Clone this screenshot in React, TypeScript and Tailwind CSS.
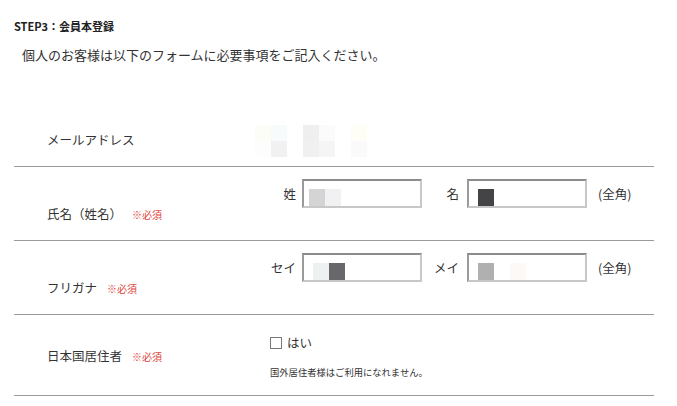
const font = "font-['Noto_Sans_CJK_JP','Noto_Sans',sans-serif]";

function Required() {
  return <span className="ml-[10px] text-[10px] text-[#e0443c]">※必須</span>;
}

function Block({ className }: { className: string }) {
  return <span className={`block w-[16px] h-[17px] ${className}`} />;
}

function TextBox({ children }: { children?: React.ReactNode }) {
  return (
    <div className="w-[120px] h-[29px] border-2 border-[#a3a3a3] border-t-[#8c8c8c] border-l-[#9a9a9a] border-b-[#c8c8c8] border-r-[#c8c8c8] bg-white flex items-end pl-[5px]">
      {children}
    </div>
  );
}

export default function App() {
  return (
    <div className={`${font} w-[677px] h-[406px] bg-white text-[#333] overflow-hidden`}>
      <div className="pt-[18px] pl-[14px] text-[11px] font-bold leading-[16px] text-[#222]">
        STEP3：会員本登録
      </div>
      <p className="mt-[11px] pl-[22px] text-[13px] leading-[20px]">
        個人のお客様は以下のフォームに必要事項をご記入ください。
      </p>

      <div className="mt-[36px] ml-[14px] w-[640px] text-[12.5px] leading-[20px]">
        {/* email */}
        <div className="flex h-[66px] border-b border-[#9a9a9a]">
          <div className="w-[241px] pl-[33px] pt-[29px]">メールアドレス</div>
          <div className="pt-[24px] grid grid-cols-[repeat(8,16px)] grid-rows-[16px_16px]">
            <span className="bg-[#fdfdf8]" />
            <span className="bg-[#f7fbfb]" />
            <span />
            <span className="bg-[#efefef]" />
            <span className="bg-[#fbfbfb]" />
            <span />
            <span className="bg-[#fefdf6]" />
            <span />
            <span className="bg-[#fdfdfd]" />
            <span className="bg-[#f1f1f1]" />
            <span />
            <span className="bg-[#f0f0f0]" />
            <span className="bg-[#f5f5f5]" />
            <span />
            <span className="bg-[#fafafa]" />
            <span />
          </div>
        </div>

        {/* name */}
        <div className="flex h-[74px] border-b border-[#9a9a9a]">
          <div className="w-[241px] pl-[33px] pt-[37px]">
            氏名（姓名）
            <Required />
          </div>
          <div className="pt-[12px] flex items-center h-[41px]">
            <span className="w-[47px] pr-[6px] text-right">姓</span>
            <TextBox>
              <Block className="bg-[#d4d4d4]" />
              <Block className="bg-[#f1f1f3]" />
            </TextBox>
            <span className="w-[45px] pr-[8px] text-right">名</span>
            <TextBox>
              <span className="ml-[4px]" />
              <Block className="bg-[#444446]" />
            </TextBox>
            <span className="ml-[11px]">(全角)</span>
          </div>
        </div>

        {/* kana */}
        <div className="flex h-[74px] border-b border-[#9a9a9a]">
          <div className="w-[241px] pl-[33px] pt-[37px]">
            フリガナ
            <Required />
          </div>
          <div className="pt-[12px] flex items-center h-[41px]">
            <span className="w-[47px] pr-[6px] text-right">セイ</span>
            <TextBox>
              <span className="ml-[4px]" />
              <Block className="bg-[#eef1f1]" />
              <Block className="bg-[#68686c]" />
            </TextBox>
            <span className="w-[45px] pr-[8px] text-right">メイ</span>
            <TextBox>
              <span className="ml-[4px]" />
              <Block className="bg-[#b0b0b0]" />
              <span className="w-[16px]" />
              <Block className="bg-[#fdf9f6]" />
            </TextBox>
            <span className="ml-[11px]">(全角)</span>
          </div>
        </div>

        {/* residence */}
        <div className="flex h-[81px] border-b border-[#9a9a9a]">
          <div className="w-[241px] pl-[33px] pt-[31px]">
            日本国居住者
            <Required />
          </div>
          <div className="pl-[15px] pt-[18px]">
            <label className="flex items-center">
              <span className="w-[12px] h-[12px] border border-[#777] bg-white" />
              <span className="ml-[5px]">はい</span>
            </label>
            <p className="mt-[12px] text-[9.3px] leading-[14px]">
              国外居住者様はご利用になれません。
            </p>
          </div>
        </div>
      </div>
    </div>
  );
}
